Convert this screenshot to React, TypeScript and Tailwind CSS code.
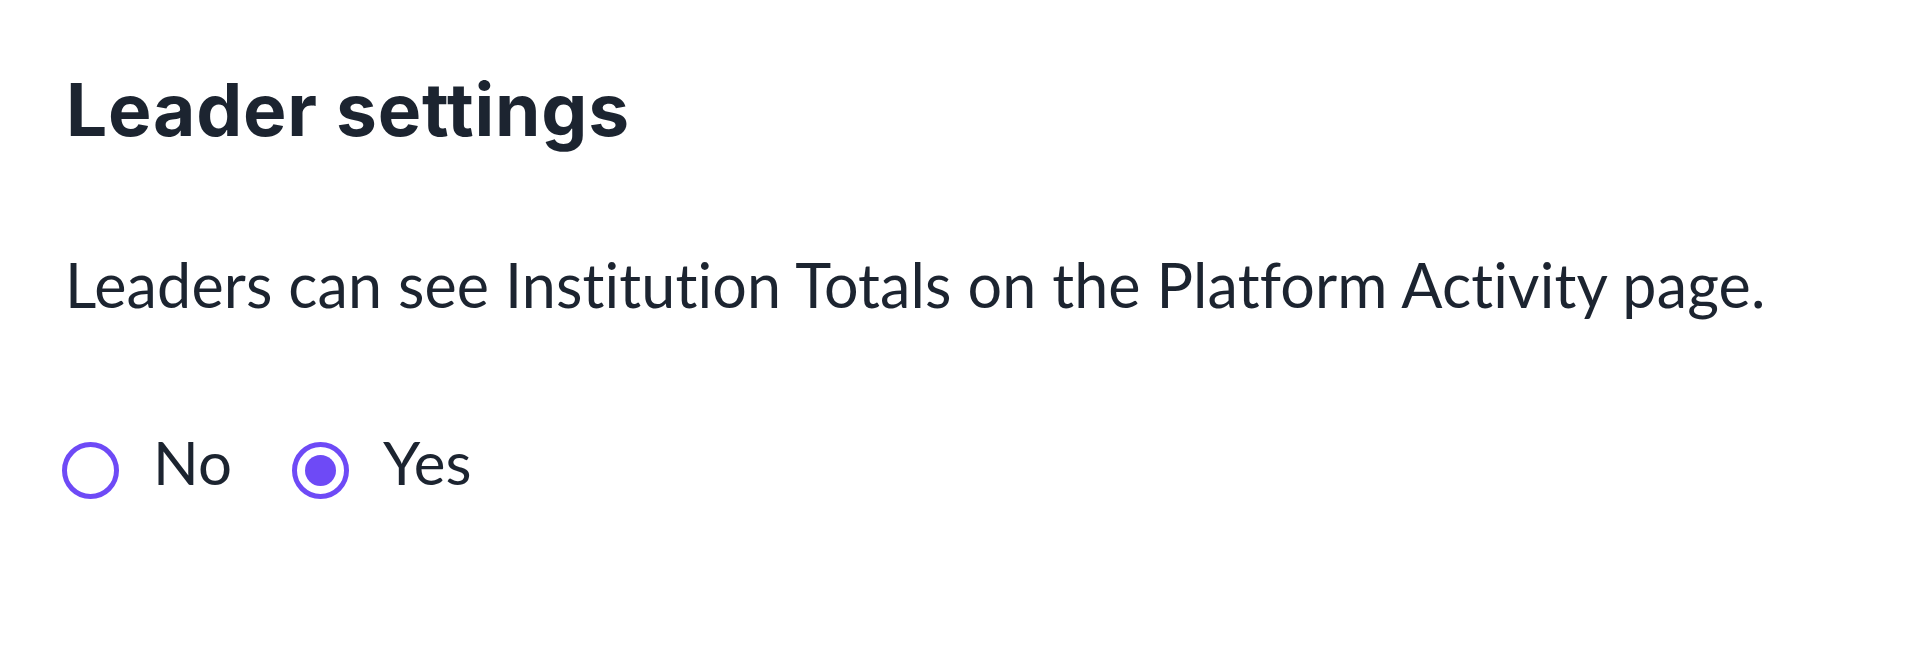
import React, { useState } from 'react';

const Radio: React.FC<{ checked: boolean; label: string; onSelect: () => void }> = ({ checked, label, onSelect }) => (
  <label className="flex items-start gap-[34px] cursor-pointer" onClick={onSelect}>
    <span className="mt-[10px] w-[57px] h-[57px] rounded-full border-[5px] border-[#6e4af6] flex items-center justify-center bg-white">
      {checked && <span className="w-[31px] h-[31px] rounded-full bg-[#6e4af6]" />}
    </span>
    <span className="text-[60px] leading-none">{label}</span>
  </label>
);

const App: React.FC = () => {
  const [value, setValue] = useState<'no' | 'yes'>('yes');

  return (
    <div className="min-h-screen bg-white font-['Lato',sans-serif] text-[#1c2430] [font-variant-ligatures:none]">
      <div className="pl-[62px] pt-[73px]">
        {/* Heading */}
        <h2 className="ml-[4px] font-['Inter',sans-serif] text-[73px] leading-none font-bold tracking-[0.8px]">
          Leader settings
        </h2>

        {/* Description */}
        <p className="ml-[3px] mt-[108px] text-[61px] leading-none tracking-[0.15px]">
          Leaders can see Institution Totals on the Platform Activity page.
        </p>

        {/* Options */}
        <div className="mt-[117px] flex items-start gap-[60px]">
          <Radio checked={value === 'no'} label="No" onSelect={() => setValue('no')} />
          <Radio checked={value === 'yes'} label="Yes" onSelect={() => setValue('yes')} />
        </div>
      </div>
    </div>
  );
};

export default App;
